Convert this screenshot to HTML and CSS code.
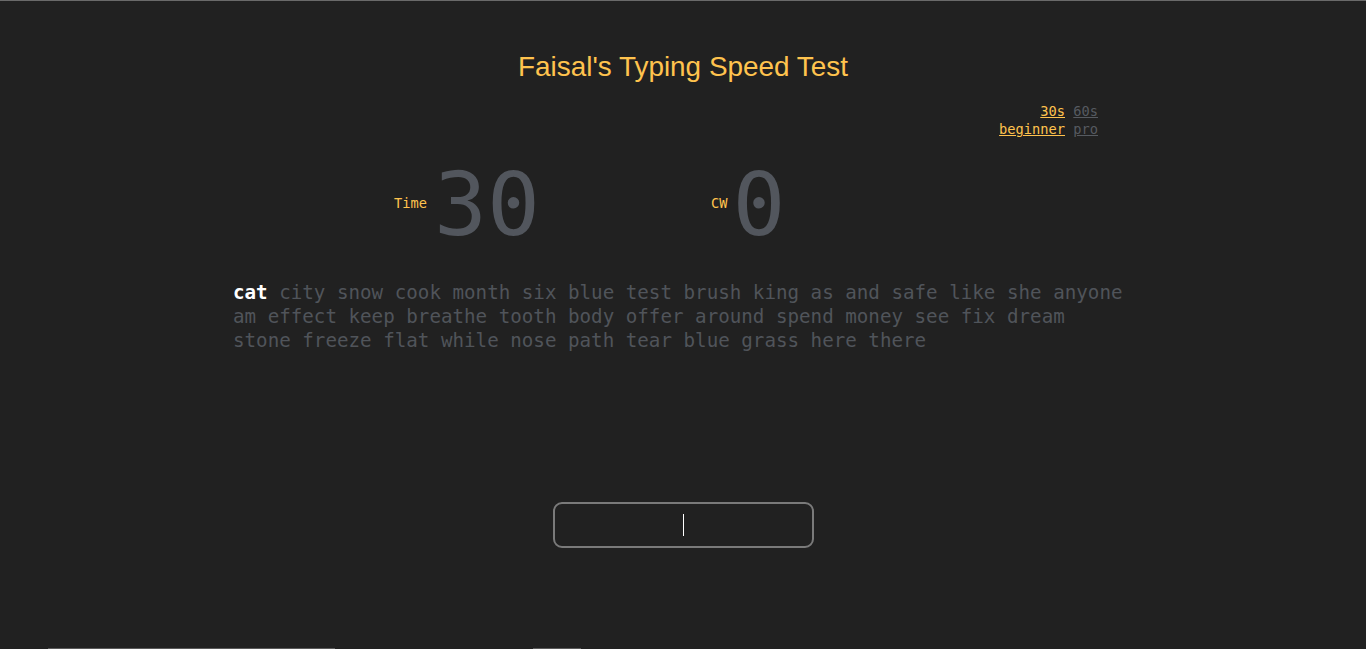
FILE: index.html
```html
<!DOCTYPE html>
<html lang="en">
<head>
<meta charset="utf-8">
<title>Faisal's Typing Speed Test</title>
<link rel="stylesheet" href="styles.css">
</head>
<body>
<div class="page">
  <h1 class="title">Faisal's Typing Speed Test</h1>
  <div class="settings">
    <div class="setting-row"><a class="opt active">30s</a> <a class="opt">60s</a></div>
    <div class="setting-row"><a class="opt active">beginner</a> <a class="opt">pro</a></div>
  </div>
  <div class="stats">
    <div class="stat stat-time"><span class="stat-label">Time</span><span class="stat-value">30</span></div>
    <div class="stat stat-cw"><span class="stat-label">CW</span><span class="stat-value">0</span></div>
  </div>
  <div class="words"><span class="word current">cat</span> city snow cook month six blue test brush king as and safe like she anyone am effect keep breathe tooth body offer around spend money see fix dream stone freeze flat while nose path tear blue grass here there</div>
  <div class="input-wrap">
    <div class="typing-input"><span class="caret"></span></div>
  </div>
  <div class="footer">
    <div class="footer-bar footer-bar-a"></div>
    <div class="footer-bar footer-bar-b"></div>
  </div>
</div>
</body>
</html>
```
FILE: styles.css
```css
html, body {
  margin: 0;
  padding: 0;
  background: #212121;
}
body {
  border-top: 1px solid #6a6a6a;
  overflow: hidden;
  height: 648px;
}
.page {
  display: flex;
  flex-direction: column;
  align-items: center;
}
.title {
  margin: 0;
  padding-top: 50px;
  font-family: "Liberation Sans", Arial, sans-serif;
  font-weight: normal;
  font-size: 27.9px;
  line-height: 32px;
  color: #ffc34e;
}
.settings {
  width: 830px;
  margin-top: 19px;
  text-align: right;
  font-family: "DejaVu Sans Mono", monospace;
  font-size: 13.7px;
  line-height: 18px;
}
.opt {
  color: #565a60;
  text-decoration: underline;
}
.opt.active {
  color: #ffc34e;
}
.stats {
  width: 900px;
  margin-top: 23px;
  display: flex;
  align-items: center;
  box-sizing: border-box;
  padding-left: 161px;
  gap: 171px;
}
.stat {
  display: flex;
  align-items: center;
  gap: 7px;
}
.stat-cw {
  gap: 5px;
}
.stat-label {
  font-family: "DejaVu Sans Mono", monospace;
  font-size: 13.7px;
  color: #ffc34e;
  margin-bottom: 4px;
}
.stat-value {
  font-family: "DejaVu Sans Mono", monospace;
  font-size: 88px;
  line-height: 88px;
  color: #52565d;
}
.words {
  width: 900px;
  margin-top: 32px;
  font-family: "DejaVu Sans Mono", monospace;
  font-size: 19.2px;
  line-height: 24px;
  color: #50545a;
}
.word.current {
  color: #ffffff;
  font-weight: bold;
}
.input-wrap {
  margin-top: 149px;
}
.typing-input {
  width: 257px;
  height: 42px;
  border: 2px solid #7a7a7a;
  border-radius: 9px;
  display: flex;
  align-items: center;
  justify-content: center;
}
.caret {
  width: 1px;
  height: 22px;
  background: #ffffff;
}
.footer {
  width: 1366px;
  margin-top: 100px;
  display: flex;
}
.footer-bar {
  height: 1px;
  background: #5a5a5a;
}
.footer-bar-a {
  margin-left: 48px;
  width: 287px;
}
.footer-bar-b {
  margin-left: 198px;
  width: 48px;
}
```
